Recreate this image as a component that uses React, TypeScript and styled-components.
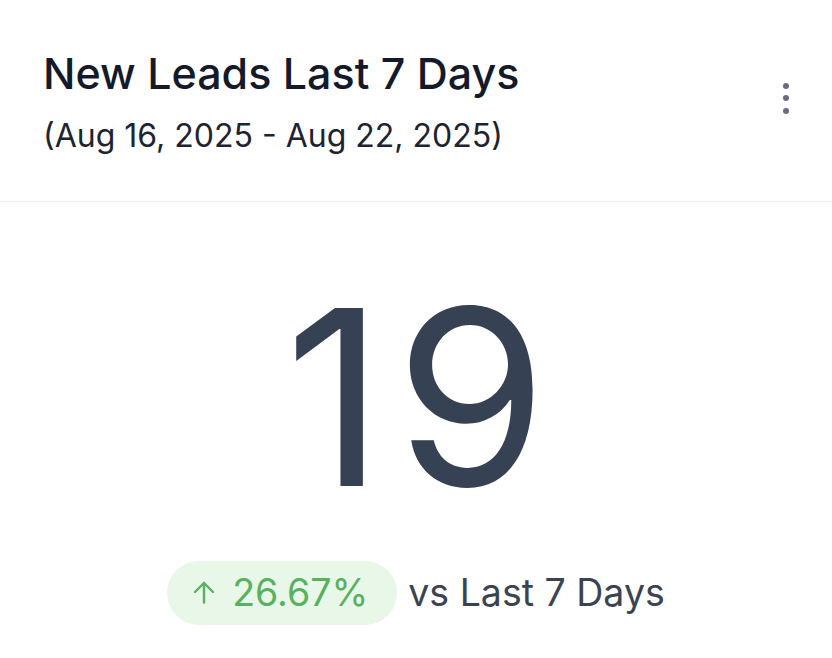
import React from "react";
import styled, { createGlobalStyle } from "styled-components";

const Global = createGlobalStyle`
  html, body { margin: 0; padding: 0; background: #ffffff; }
  body { font-family: Inter, "Noto Sans", sans-serif; }
`;

const Card = styled.div`
  width: 832px;
  height: 658px;
  background: #ffffff;
  display: flex;
  flex-direction: column;
  box-sizing: border-box;
`;

const Header = styled.div`
  display: flex;
  align-items: center;
  justify-content: space-between;
  padding: 47px 40px 45px 43px;
  border-bottom: 1.5px solid #ececec;
`;

const TitleBlock = styled.div`
  display: flex;
  flex-direction: column;
  gap: 18px;
`;

const Title = styled.h1`
  margin: 0;
  font-size: 43px;
  line-height: 1.21;
  font-weight: 500;
  color: #141a29;
`;

const Subtitle = styled.div`
  font-size: 32px;
  line-height: 1.21;
  font-weight: 400;
  color: #1d2331;
`;

const MenuButton = styled.button`
  border: 0;
  background: transparent;
  padding: 0;
  width: 12px;
  display: flex;
  flex-direction: column;
  align-items: center;
  gap: 6.5px;
  cursor: pointer;
  margin-top: -6px;
`;

const Dot = styled.span`
  width: 6px;
  height: 6px;
  border-radius: 50%;
  background: #6c6b86;
`;

const Body = styled.div`
  display: flex;
  flex-direction: column;
  align-items: center;
  padding-top: 73px;
`;

const BigNumber = styled.div`
  font-size: 245px;
  line-height: 245px;
  font-weight: 400;
  color: #364153;
  letter-spacing: 11px;
  padding-left: 11px;
`;

const CompareRow = styled.div`
  display: flex;
  align-items: center;
  gap: 11px;
  margin-top: 41px;
`;

const Badge = styled.div`
  display: flex;
  align-items: center;
  gap: 17px;
  height: 64px;
  padding: 0 29px 0 26px;
  border-radius: 32px;
  background: #e9f7e9;
  color: #58b15e;
  font-size: 37.5px;
  font-weight: 400;
`;

const CompareText = styled.span`
  font-size: 37.5px;
  font-weight: 400;
  color: #3c4350;
`;

export default function App() {
  return (
    <>
      <Global />
      <Card>
        <Header>
          <TitleBlock>
            <Title>New Leads Last 7 Days</Title>
            <Subtitle>(Aug 16, 2025 - Aug 22, 2025)</Subtitle>
          </TitleBlock>
          <MenuButton aria-label="More options">
            <Dot />
            <Dot />
            <Dot />
          </MenuButton>
        </Header>
        <Body>
          <BigNumber>19</BigNumber>
          <CompareRow>
            <Badge>
              <svg width="22" height="23" viewBox="0 0 22 23" fill="none" stroke="currentColor" strokeWidth="2.4" strokeLinecap="round" strokeLinejoin="round">
                <path d="M11 21.5V2" />
                <path d="M2 11L11 2l9 9" />
              </svg>
              <span>26.67%</span>
            </Badge>
            <CompareText>vs Last 7 Days</CompareText>
          </CompareRow>
        </Body>
      </Card>
    </>
  );
}
